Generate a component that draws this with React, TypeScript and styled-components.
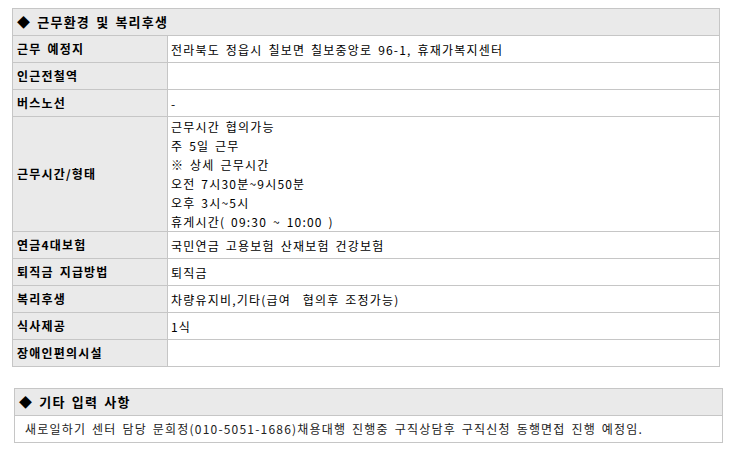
import styled, { createGlobalStyle } from "styled-components";

const GlobalStyle = createGlobalStyle`
  body {
    margin: 0;
    background: #fff;
    font-family: "Noto Sans CJK KR", "Noto Sans", sans-serif;
    font-size: 12px;
    color: #111;
  }
  * {
    box-sizing: border-box;
  }
`;

interface rowType {
  label: string;
  value?: string[];
}

const rows: rowType[] = [
  { label: "근무 예정지", value: ["전라북도 정읍시 칠보면 칠보중앙로 96-1, 휴재가복지센터"] },
  { label: "인근전철역" },
  { label: "버스노선", value: ["-"] },
  {
    label: "근무시간/형태",
    value: [
      "근무시간 협의가능",
      "주 5일 근무",
      "※ 상세 근무시간",
      "오전 7시30분~9시50분",
      "오후 3시~5시",
      "휴게시간( 09:30 ~ 10:00 )",
    ],
  },
  { label: "연금4대보험", value: ["국민연금 고용보험 산재보험 건강보험"] },
  { label: "퇴직금 지급방법", value: ["퇴직금"] },
  { label: "복리후생", value: ["차량유지비,기타(급여  협의후 조정가능)"] },
  { label: "식사제공", value: ["1식"] },
  { label: "장애인편의시설" },
];

const App = () => {
  return (
    <Page>
      <GlobalStyle />
      <InfoTable>
        <Title>◆ 근무환경 및 복리후생</Title>
        {rows.map((row) => (
          <Row key={row.label}>
            <Label>{row.label}</Label>
            <Value>
              {row.value?.map((line, i) => (
                <Line key={i}>{line}</Line>
              ))}
            </Value>
          </Row>
        ))}
      </InfoTable>
      <NoteTable>
        <Title>◆ 기타 입력 사항</Title>
        <Note>
          새로일하기 센터 담당 문희정(010-5051-1686)채용대행 진행중 구직상담후 구직신청 동행면접 진행 예정임.
        </Note>
      </NoteTable>
    </Page>
  );
};

export default App;

const Page = styled.div`
  display: flex;
  flex-direction: column;
  align-items: flex-start;
  gap: 21px;
  padding: 8px 0 0 12px;
  letter-spacing: 1.2px;
  word-spacing: 2px;
`;

const InfoTable = styled.div`
  display: flex;
  flex-direction: column;
  width: 708px;
  border-top: 1px solid #c6c6c6;
  border-left: 1px solid #c6c6c6;
`;

const NoteTable = styled(InfoTable)`
  width: 709px;
  margin-left: 2px;
`;

const Title = styled.div`
  display: flex;
  align-items: center;
  height: 27px;
  padding: 0 0 1px 4px;
  background: #eaeaea;
  border-right: 1px solid #c6c6c6;
  border-bottom: 1px solid #c6c6c6;
  font-size: 13px;
  font-weight: bold;
  color: #000;
`;

const Row = styled.div`
  display: grid;
  grid-template-columns: 155px 1fr;
`;

const Label = styled.div`
  display: flex;
  align-items: center;
  min-height: 27px;
  padding: 0 0 1px 4px;
  background: #eaeaea;
  border-right: 1px solid #c6c6c6;
  border-bottom: 1px solid #c6c6c6;
  font-weight: bold;
  color: #000;
`;

const Value = styled.div`
  display: flex;
  flex-direction: column;
  justify-content: center;
  min-height: 27px;
  padding: 0 0 0 3px;
  background: #fff;
  border-right: 1px solid #c6c6c6;
  border-bottom: 1px solid #c6c6c6;
  color: #000;
`;

const Line = styled.div`
  line-height: 19px;
  white-space: pre;
`;

const Note = styled.div`
  display: flex;
  align-items: center;
  height: 27px;
  padding: 0 0 1px 10px;
  background: #fff;
  border-right: 1px solid #c6c6c6;
  border-bottom: 1px solid #c6c6c6;
  color: #222;
`;
